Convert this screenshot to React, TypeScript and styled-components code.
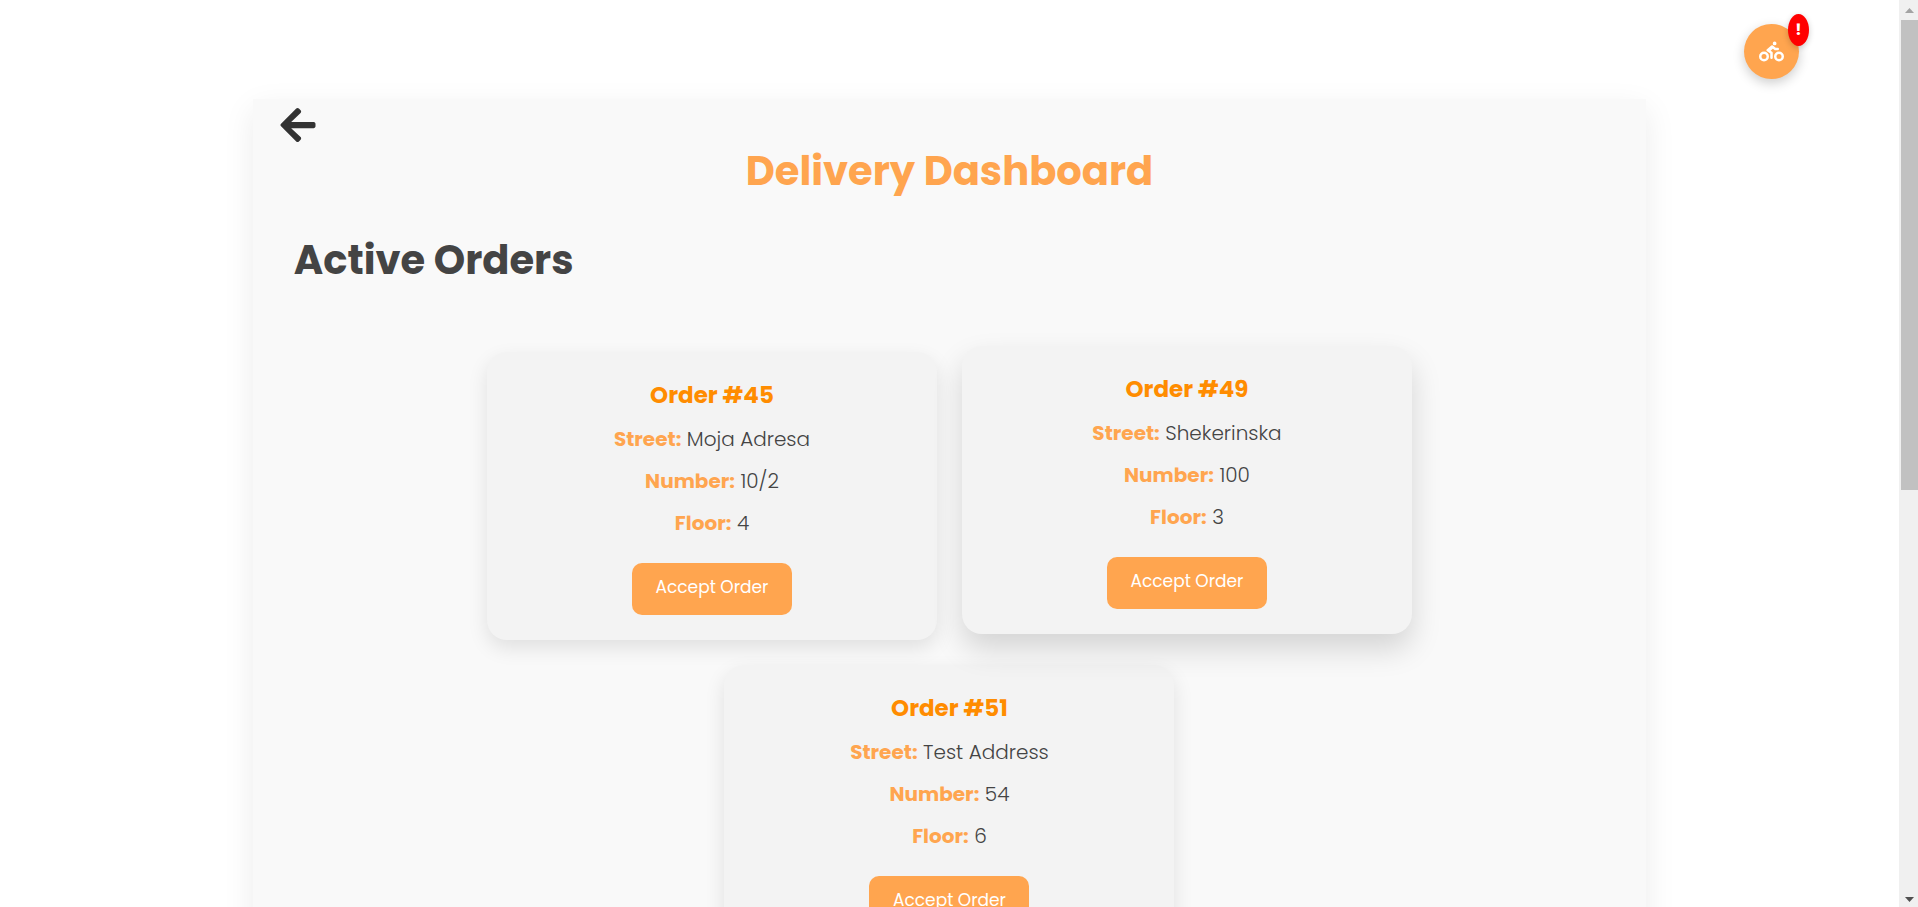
import React from "react";
import styled, { createGlobalStyle } from "styled-components";
import { FaArrowLeft, FaBiking } from "react-icons/fa";

const GlobalStyle = createGlobalStyle`
  * {
    box-sizing: border-box;
  }
  body {
    margin: 0;
    background: #fff;
    color: #444;
    font-family: Poppins, Inter, "Liberation Sans", sans-serif;
  }
`;

const Screen = styled.div`
  display: flex;
  height: 100vh;
  overflow: hidden;
`;

const Viewport = styled.div`
  position: relative;
  flex: 1;
  min-width: 0;
  overflow: hidden;
`;

const Panel = styled.main`
  width: calc(70% + 64px);
  margin: 99px auto 0;
  padding: 6px 25px 40px;
  background: #f9f9f9;
  box-shadow: 0 10px 30px rgba(0, 0, 0, 0.08);
`;

const BackButton = styled.button`
  display: block;
  padding: 0;
  border: 0;
  background: none;
  color: #333;
  font-size: 40px;
  line-height: 0;
  cursor: pointer;
`;

const Title = styled.h1`
  margin: 2px 0 0;
  color: #ffa54f;
  font-size: 40px;
  font-weight: 700;
  line-height: 48px;
  text-align: center;
`;

const SectionTitle = styled.h2`
  margin: 41px 16px 0;
  font-size: 40px;
  font-weight: 700;
  line-height: 48px;
`;

const OrderList = styled.section`
  display: flex;
  flex-wrap: wrap;
  justify-content: center;
  gap: 25px;
  max-width: 1150px;
  margin: 68px auto 0;
`;

const OrderCard = styled.article<{ $raised?: boolean }>`
  display: flex;
  flex-direction: column;
  align-items: center;
  width: 450px;
  padding: 25px;
  border-radius: 20px;
  background: #f3f3f3;
  box-shadow: ${({ $raised }) =>
    $raised ? "0 15px 30px rgba(0, 0, 0, 0.15)" : "0 8px 20px rgba(0, 0, 0, 0.1)"};
  transform: ${({ $raised }) => ($raised ? "translateY(-6px)" : "none")};
`;

const OrderName = styled.h3`
  margin: 0 0 10px;
  color: #ff8c00;
  font-size: 23px;
  font-weight: 700;
  line-height: 36px;
`;

const OrderField = styled.p`
  margin: 0 0 10px;
  font-size: 20px;
  font-weight: 300;
  line-height: 32px;
`;

const FieldLabel = styled.strong`
  color: #ffa54f;
  font-weight: 700;
`;

const AcceptButton = styled.button`
  width: 160px;
  height: 52px;
  margin-top: 14px;
  padding: 0 0 4px;
  border: 0;
  border-radius: 10px;
  background: #ffa54f;
  color: #fff;
  font-family: inherit;
  font-size: 17px;
  cursor: pointer;
`;

const DeliveryButton = styled.button`
  position: absolute;
  top: 24px;
  right: 100px;
  display: flex;
  align-items: center;
  justify-content: center;
  width: 55px;
  height: 55px;
  padding: 0;
  border: 0;
  border-radius: 50%;
  background: #ffa54f;
  box-shadow: 0 4px 12px rgba(0, 0, 0, 0.2);
  color: #fff;
  font-size: 25px;
  cursor: pointer;
`;

const AlertBadge = styled.span`
  position: absolute;
  top: -10px;
  right: -10px;
  width: 21px;
  height: 32px;
  border-radius: 50%;
  background: #f00;
  box-shadow: 0 2px 6px rgba(0, 0, 0, 0.2);
  font-family: Poppins, Inter, sans-serif;
  font-size: 16px;
  font-weight: 700;
  line-height: 32px;
  text-align: center;
`;

const ScrollTrack = styled.div`
  display: flex;
  flex-direction: column;
  align-items: center;
  width: 19px;
  padding-left: 2px;
  background: #f0f0f0;
`;

const ScrollArrow = styled.svg`
  width: 17px;
  height: 20px;
`;

const ScrollRail = styled.div`
  flex: 1;
  width: 100%;
`;

const ScrollThumb = styled.div`
  height: 54.2%;
  background: #c1c1c1;
`;

type Order = { id: number; street: string; number: string; floor: number };

const orders: Order[] = [
  { id: 45, street: "Moja Adresa", number: "10/2", floor: 4 },
  { id: 49, street: "Shekerinska", number: "100", floor: 3 },
  { id: 51, street: "Test Address", number: "54", floor: 6 },
];

const activeOrderId = 49;

export default function App() {
  return (
    <>
      <GlobalStyle />
      <Screen>
        <Viewport>
          <Panel>
            <BackButton aria-label="Back">
              <FaArrowLeft />
            </BackButton>
            <Title>Delivery Dashboard</Title>
            <SectionTitle>Active Orders</SectionTitle>
            <OrderList>
              {orders.map((order) => (
                <OrderCard key={order.id} $raised={order.id === activeOrderId}>
                  <OrderName>Order #{order.id}</OrderName>
                  <OrderField>
                    <FieldLabel>Street:</FieldLabel> {order.street}
                  </OrderField>
                  <OrderField>
                    <FieldLabel>Number:</FieldLabel> {order.number}
                  </OrderField>
                  <OrderField>
                    <FieldLabel>Floor:</FieldLabel> {order.floor}
                  </OrderField>
                  <AcceptButton>Accept Order</AcceptButton>
                </OrderCard>
              ))}
            </OrderList>
          </Panel>
          <DeliveryButton aria-label="Deliveries">
            <FaBiking />
            <AlertBadge>!</AlertBadge>
          </DeliveryButton>
        </Viewport>
        <ScrollTrack aria-hidden="true">
          <ScrollArrow viewBox="0 0 17 20">
            <path d="M4 13h9L8.500 8z" fill="#a3a3a3" />
          </ScrollArrow>
          <ScrollRail>
            <ScrollThumb />
          </ScrollRail>
          <ScrollArrow viewBox="0 0 17 20">
            <path d="M4 10h9L8.500 15z" fill="#505050" />
          </ScrollArrow>
        </ScrollTrack>
      </Screen>
    </>
  );
}
